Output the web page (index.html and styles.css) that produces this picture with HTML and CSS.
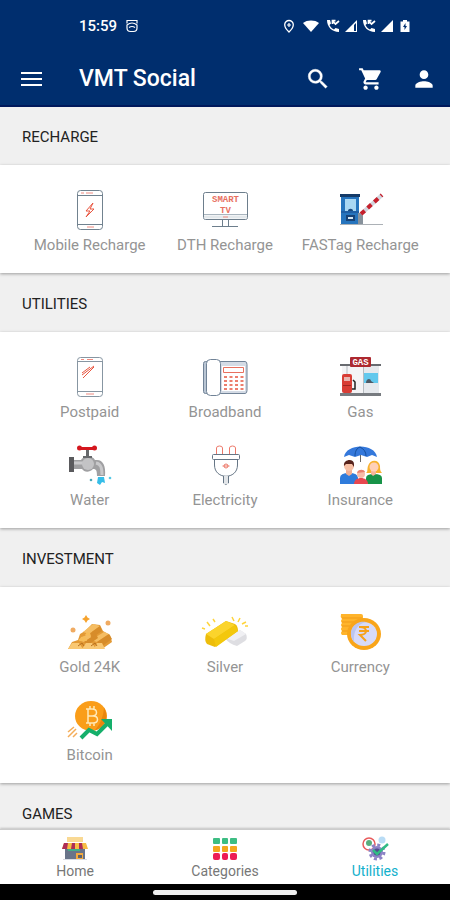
FILE: index.html
```html
<!DOCTYPE html>
<html lang="en">
<head>
  <meta charset="UTF-8">
  <meta name="viewport" content="width=device-width, initial-scale=1.0">
  <title>VMT Social</title>
  <link rel="stylesheet" href="styles.css">
</head>
<body>
  <header class="top">
    <div class="status">
      <span class="time">15:59</span>
      <svg class="status-icon" viewBox="0 0 14 14" fill="none" stroke="#fff"><path d="M2 4.500V1.500h10v3M2 6v3q0 3.500 3.500 3.500h3q3.500 0 3.500-3.500V6q-5-4-10 0zM4 8.500q3-2 6 0" stroke-width="1.200"/></svg>
      <div class="status-right">
        <svg class="status-icon spaced" viewBox="0 0 14 14"><path d="M7 1.500a4.300 4.300 0 0 0-4.300 4.300C2.700 9 7 13 7 13s4.300-4 4.300-7.200A4.300 4.300 0 0 0 7 1.500z" fill="none" stroke="#fff" stroke-width="1.300"/><path d="M7 4v4M5 6h4" stroke="#fff" stroke-width="1.200"/></svg>
        <svg class="status-icon wifi" viewBox="0 0 18 14"><path d="M1 4C5 .7 13 .7 17 4L9 13z" fill="#fff"/></svg>
        <svg class="status-icon" viewBox="0 0 14 14" fill="#fff"><path d="M1 1h3l1 3.500L3.500 6C4.500 8 6 9.500 8 10.500L9.500 9l3.500 1v3C6 13 1 8 1 1z"/><path d="M6.500 2l3 3L13 2M6.500 5V1.700h3" fill="none" stroke="#fff" stroke-width="1.700"/></svg>
        <svg class="status-icon" viewBox="0 0 14 14"><path d="M1 13L13 1v12z" fill="#fff"/><path d="M10 6v6h2V4z" fill="#002e6e"/></svg>
        <svg class="status-icon" viewBox="0 0 14 14" fill="#fff"><path d="M1 1h3l1 3.500L3.500 6C4.500 8 6 9.500 8 10.500L9.500 9l3.500 1v3C6 13 1 8 1 1z"/><path d="M6.500 2l3 3L13 2M6.500 5V1.700h3" fill="none" stroke="#fff" stroke-width="1.700"/></svg>
        <svg class="status-icon" viewBox="0 0 14 14"><path d="M1 13L13 1v12z" fill="#fff"/></svg>
        <svg class="status-icon" viewBox="0 0 14 14"><path d="M5 1h4v1.500h2.500V13h-9V2.500H5z" fill="#fff"/><path d="M7.500 4L5 8h1.500v3L9 7H7.500z" fill="#002e6e"/></svg>
      </div>
    </div>
    <div class="appbar">
      <button class="icon-btn" aria-label="Menu">
        <svg viewBox="0 0 26 26" fill="none" stroke="#fff" stroke-width="2"><path d="M3 7h21M3 13h21M3 19h21"/></svg>
      </button>
      <h1>VMT Social</h1>
      <button class="icon-btn" aria-label="Search">
        <svg viewBox="0 0 24 24" fill="#fff" stroke="#fff" stroke-width=".4"><path d="M15.500 14h-.79l-.28-.27A6.470 6.470 0 0 0 16 9.500 6.500 6.500 0 1 0 9.500 16c1.610 0 3.090-.59 4.230-1.570l.27.28v.79l5 4.990L20.490 19l-4.990-5zm-6 0C7.010 14 5 11.990 5 9.500S7.010 5 9.500 5 14 7.010 14 9.500 11.990 14 9.500 14z"/></svg>
      </button>
      <button class="icon-btn" aria-label="Cart">
        <svg viewBox="0 0 24 24" fill="#fff"><path d="M7 18c-1.100 0-1.990.9-1.990 2S5.900 22 7 22s2-.9 2-2-.9-2-2-2zM1 2v2h2l3.600 7.590-1.350 2.450c-.16.280-.25.610-.25.960 0 1.100.9 2 2 2h12v-2H7.420c-.14 0-.25-.11-.25-.25l.03-.12.9-1.630h7.450c.75 0 1.410-.41 1.750-1.030l3.580-6.490A1 1 0 0 0 20 4H5.210l-.94-2H1zm16 16c-1.100 0-1.990.9-1.990 2s.89 2 1.990 2 2-.9 2-2-.9-2-2-2z"/></svg>
      </button>
      <button class="icon-btn" aria-label="Account">
        <svg viewBox="0 0 24 24" fill="#fff"><path d="M12 12c2.210 0 4-1.790 4-4s-1.790-4-4-4-4 1.790-4 4 1.790 4 4 4zm0 2c-2.670 0-8 1.340-8 4v2h16v-2c0-2.660-5.330-4-8-4z"/></svg>
      </button>
    </div>
  </header>

  <main>
    <section>
      <h2>RECHARGE</h2>
      <div class="grid">
        <a class="tile" href="#">
          <svg viewBox="0 0 48 48" fill="none" stroke="#71828f"><rect x="11.500" y="4.500" width="25" height="39" rx="3"/><path d="M12 9.500h24M12 38.500h24"/><path d="M15 7h3M20 7h7M21 41h7" stroke="#f08a80"/><path d="M27 17l-7 8h4l-4 6 8-8h-4z" stroke="#e8553f"/></svg>
          <span>Mobile Recharge</span>
        </a>
        <a class="tile" href="#">
          <svg viewBox="0 0 48 48" fill="none" stroke="#6d7e8c"><rect x="2.500" y="6.500" width="44" height="27" rx="2"/><path d="M3 28.500h43" stroke="#a9b5be"/><path d="M21.500 34v6M27.500 34v6M11 40.500h26"/><path d="M3 31h43" stroke="#e3e8eb" stroke-width="3"/><path d="M22 31h5" stroke="#f08a80"/><g class="tv-text"><text x="24.500" y="16">SMART</text><text x="24.500" y="27">TV</text></g></svg>
          <span>DTH Recharge</span>
        </a>
        <a class="tile" href="#">
          <svg viewBox="0 0 48 48"><path d="M5 10h18v28H5z" fill="#2674bd"/><path d="M4 8h20v3H4z" fill="#153b68"/><path d="M9 13h11v12H9z" fill="#a9d7f3"/><path d="M12 25c0-3 5-3 5 0z" fill="#17487e"/><path d="M5 25h18v2H5z" fill="#1f5fa5"/><path d="M10 29h9v6h-9z" fill="#174276"/><path d="M12 31h5v2h-5z" fill="#d8e8f3"/><path d="M22 27h5v11h-5z" fill="#87929c"/><path d="M25 28L46 9" stroke="#d2d5de" stroke-width="4"/><path d="M25 28L46 9" stroke="#c6202c" stroke-width="4" stroke-dasharray="5 4"/><path d="M4 38.500h43" stroke="#acb1b6"/></svg>
          <span>FASTag Recharge</span>
        </a>
      </div>
    </section>

    <section>
      <h2>UTILITIES</h2>
      <div class="grid">
        <a class="tile" href="#">
          <svg viewBox="0 0 48 48" fill="none" stroke="#8796a2"><rect x="11.500" y="4.500" width="25" height="39" rx="3"/><path d="M12 8.500h24M12 38.500h24"/><path d="M15 6.500h3M21 6.500h6M20 41h8" stroke="#f08a80"/><path d="M16 20l8-6M16 22l12-9M17 25l11-11" stroke="#e8553f"/></svg>
          <span>Postpaid</span>
        </a>
        <a class="tile" href="#">
          <svg viewBox="0 0 48 48" fill="none" stroke="#718397"><rect x="2.500" y="8.500" width="6" height="32" rx="2" fill="#b9c5d3"/><path d="M18 8.500h26q2 0 2 3v26q0 3-2 3H18z" fill="#d4dbe5"/><rect x="5.500" y="6.500" width="14" height="36" rx="4" fill="#fff"/><path d="M21 13h23v25H21z" fill="#fff" stroke="none"/><path d="M22.500 14.500h20v5h-20z" fill="#fff" stroke="#e8705f"/><path d="M23 24h20M23 28h20M23 32h20M23 36h20" stroke="#e8553f" stroke-width="1.500" stroke-dasharray="3 2.500"/></svg>
          <span>Broadband</span>
        </a>
        <a class="tile" href="#">
          <svg viewBox="0 0 48 48"><path d="M6 13h37v27H6z" fill="#f4f4f6"/><path d="M27 13h16v27H27z" fill="#e6e9ed"/><path d="M4 11h41v2H4z" fill="#686b70"/><path d="M4 40h41v3H4z" fill="#777b80"/><path d="M28 20h14v10H28z" fill="#62c8ed"/><path d="M30 30c0-5 5-5 5-2l3 2z" fill="#4d5965"/><path d="M11 13v9M27.500 13v27" stroke="#b7bcc1"/><rect x="6" y="21" width="10" height="19" rx="2" fill="#d83d35"/><path d="M8 24h6v4H8z" fill="#e7b6b1"/><path d="M7 32h8v1H7z" fill="#9e2721"/><path d="M16 36h3v-7l-2-2" fill="none" stroke="#222" stroke-width="1.500"/><rect x="14" y="4" width="21" height="10" rx="1" fill="#ad2930"/><text x="24.500" y="12" class="gas-text">GAS</text></svg>
          <span>Gas</span>
        </a>
        <a class="tile" href="#">
          <svg viewBox="0 0 48 48"><path d="M3 16h5v15H3z" fill="#5a5a5d"/><path d="M8 19h7c2-4 11-5 14 0h2c6 0 9 6 8 16h-8c0-6-1-7-4-7-4 4-9 3-11 0H8z" fill="#a0a0a2"/><path d="M8 22h16M30 22c5 1 6 5 6 12" fill="none" stroke="#c9c9cb" stroke-width="3"/><circle cx="22" cy="23" r="6" fill="#c3c3c5"/><path d="M20 9h3v6h3v2h-9v-2h3z" fill="#66686b"/><path d="M14 7.500h14" stroke="#d4171e" stroke-width="3"/><circle cx="13.500" cy="7" r="2.500" fill="#d4171e"/><circle cx="28.500" cy="7" r="2.500" fill="#d4171e"/><path d="M32 36h6l1 6-3-1-2 3-3-2z" fill="#35bde8"/><circle cx="25" cy="39" r="1.300" fill="#4ba9b9"/><circle cx="44" cy="37" r="1.300" fill="#57c8e5"/></svg>
          <span>Water</span>
        </a>
        <a class="tile" href="#">
          <svg viewBox="0 0 48 48" fill="none" stroke="#657585"><path d="M15.500 13V7q0-2 3-2t3 2v6M28.500 13V7q0-2 3-2t3 2v6" stroke="#ed7869"/><rect x="11.500" y="13.500" width="27" height="5" rx="1"/><path d="M13.500 19v5c0 15 23 15 23 0v-5M22.500 35v7q2 3 5 0v-7"/><path d="M23 35h4v8h-4z" fill="#e2e5e8" stroke="none"/><circle cx="25" cy="25" r="2" stroke="#ed7869"/><path d="M21.500 25h7" stroke="#ed7869"/></svg>
          <span>Electricity</span>
        </a>
        <a class="tile" href="#">
          <svg viewBox="0 0 48 48"><path d="M8 16C10 2 39 2 41 16l-5-2-5 2-6-2-6 2-6-2z" fill="#3478db"/><path d="M19 15c0-5 2-8 5-9 4 2 6 5 6 9" fill="none" stroke="#164f9b"/><path d="M24.500 14v7" stroke="#686868"/><path d="M4 43v-6q0-5 9-5t9 5v6z" fill="#2f7bdb"/><path d="M10 28h6v5l-3 2-3-2z" fill="#f3ae91"/><circle cx="13" cy="25" r="5" fill="#f8c0a5"/><path d="M8 25c-1-7 10-8 10-2v3l-2-3h-6z" fill="#57231c"/><path d="M30 32c2-1 1-4 2-7 2-7 11-7 12 0 0 3 0 5 2 7z" fill="#f8b22f"/><path d="M30 43v-6q0-4 8-4t8 4v6z" fill="#189348"/><path d="M35 28h5v5l-3 2-2-2z" fill="#f5b59a"/><circle cx="38" cy="26" r="4.500" fill="#ffd0b8"/><path d="M18 43c0-8 14-8 14 0z" fill="#e8474f"/><circle cx="25" cy="33" r="4" fill="#f8bba8"/><path d="M21 32c1-4 7-4 8-1z" fill="#e97f6f"/></svg>
          <span>Insurance</span>
        </a>
      </div>
    </section>

    <section>
      <h2>INVESTMENT</h2>
      <div class="grid">
        <a class="tile" href="#">
          <svg viewBox="0 0 48 48"><path d="M20 7l1.500 2.500L24 11l-2.500 1.500L20 15l-1.500-2.500L16 11l2.500-1.500z" fill="#f6a32e"/><circle cx="7" cy="22" r="2.500" fill="#f0ab62"/><circle cx="42" cy="15" r="2.500" fill="#f0ab62"/><path d="M2 41l4-7 6-2 2-6 5-3 7-7 8 1 3 6 7 4 2 7-10 7z" fill="#e39a35"/><path d="M17 24l10-8 7 2-11 8z" fill="#f5bd62"/><path d="M12 32l13-8 5 2-12 8zM25 32l13-8 5 2-12 8z" fill="#f5bd62"/><path d="M23 26l11-8 2 5-10 7zM18 34l12-8 2 4-10 7zM31 34l12-8 3 5-11 8z" fill="#d78c2a"/><path d="M2 41l4-6h7l4 6zM16 41l4-6h6l4 6zM28 41l3-6h5l3 6z" fill="#f9c873"/><path d="M13 33l2-4 4-1 2 5zM19 27l2-3 3 1 1 3z" fill="#f7bd58"/><path d="M12 38l4-3 2 3M25 38l4-3 2 3" fill="none" stroke="#b8701e"/></svg>
          <span>Gold 24K</span>
        </a>
        <a class="tile" href="#">
          <svg viewBox="0 0 48 48"><path d="M24 30l15-8 6 4q2 5-1 7l-8 5q-8-2-12-8z" fill="#dedee2"/><path d="M24 30l15-8 6 4-12 7z" fill="#f0f0f3"/><path d="M5 26l20-13 9 3q3 2 3 7L14 39l-8-3q-3-3-1-10z" fill="#edbd0b"/><path d="M5 26l20-13 9 4-21 14z" fill="#fbd42c"/><path d="M13 31l21-14 3 6-22 16z" fill="#f3c80d"/><path d="M1 20l3 1M6 14l3 4M12 11l2 3M31 9l2 4M39 10l-2 4M45 14l-4 2M47 18h-3" stroke="#ffd43c" stroke-width="1.500"/></svg>
          <span>Silver</span>
        </a>
        <a class="tile" href="#">
          <svg viewBox="0 0 48 48"><path d="M5 6h20q2 0 2 2v19H6q-2-2 0-4-2-2 0-4-2-2 0-4-2-2 0-4-2-2-1-5z" fill="#ffb42b"/><path d="M6 10h20M6 14h16M6 18h10M6 23h6" stroke="#f19b18"/><ellipse cx="28" cy="26" rx="17" ry="16" fill="#f9a51a"/><ellipse cx="28" cy="26" rx="13" ry="12" fill="#d7daf8"/><path d="M18 34c-8-11 1-22 12-20-9 2-13 10-12 20z" fill="#bcc5ee"/><path d="M23 19h10M23 23h10M24 19c8 0 8 8 0 8l6 6" fill="none" stroke="#f6a21b" stroke-width="2"/></svg>
          <span>Currency</span>
        </a>
        <a class="tile" href="#">
          <svg viewBox="0 0 48 48"><ellipse cx="25" cy="20" rx="16" ry="15" fill="#fa9d19"/><path d="M38 12c6 10 0 20-10 23 5-5 9-12 10-23z" fill="#e9860d"/><path d="M22 13v14M20 13h6c6 0 6 7 0 7h-4M22 20h5c6 0 6 7 0 7h-7M24 10v3M28 10v3M24 27v3M28 27v3" fill="none" stroke="#ffe9b8" stroke-width="1.500"/><path d="M15 42l8-8 8 4 12-12" fill="none" stroke="#15af6b" stroke-width="4"/><path d="M35 23h11v12z" fill="#15af6b"/><path d="M2 36l6-5M2 41l8-8M7 41l4-4" stroke="#f4ad59" stroke-width="1.500"/></svg>
          <span>Bitcoin</span>
        </a>
      </div>
    </section>

    <section>
      <h2>GAMES</h2>
    </section>
  </main>

  <nav class="bottom-nav">
    <a href="#">
      <svg viewBox="0 0 28 28"><path d="M6 2h16v5H6z" fill="#f9d994"/><path d="M4 13h20v11H4z" fill="#697489"/><path d="M2 24h24v1H2z" fill="#d9dce3"/><path d="M3 8h22l2 6H1z" fill="#f7bd45"/><path d="M3 8h4l-1 6H1zM11 8h3v6h-4zM18 8h3l1 6h-4z" fill="#ae2d56"/><path d="M7 14h12v2H7z" fill="#43ae87"/><path d="M15 18h7v6h-7z" fill="#f5aa3d"/><path d="M17 20h4v3h-4z" fill="#5c6270"/></svg>
      <span>Home</span>
    </a>
    <a href="#">
      <svg viewBox="0 0 28 28"><g fill="#3dbd83"><rect x="2" y="3" width="7" height="6" rx="1"/><rect x="11" y="3" width="6" height="6" rx="1"/><rect x="19" y="3" width="7" height="6" rx="1"/></g><g fill="#f4a71d"><rect x="2" y="11" width="7" height="6" rx="1"/><rect x="11" y="11" width="6" height="6" rx="1"/><rect x="19" y="11" width="7" height="6" rx="1"/></g><g fill="#ed1c55"><rect x="2" y="18" width="7" height="7" rx="2"/><rect x="11" y="18" width="6" height="7" rx="2"/><rect x="19" y="18" width="7" height="7" rx="2"/></g></svg>
      <span>Categories</span>
    </a>
    <a href="#" class="active">
      <svg viewBox="0 0 28 28"><circle cx="8" cy="9" r="6" fill="#fff" stroke="#e85b5c" stroke-width="1.500"/><circle cx="8" cy="8" r="3" fill="#59ad7d"/><circle cx="21" cy="5" r="3.500" fill="#b9dcf5"/><circle cx="16" cy="17" r="7" fill="none" stroke="#8d83c6" stroke-width="3" stroke-dasharray="3 2.500"/><circle cx="16" cy="17" r="6" fill="#8d83c6"/><circle cx="16" cy="17" r="3.500" fill="#514d90"/><path d="M12 15l4 4L27 9" fill="none" stroke="#31bc85" stroke-width="2.500"/></svg>
      <span>Utilities</span>
    </a>
  </nav>
  <div class="gesture-bar"></div>
</body>
</html>
```

FILE: styles.css
```css
* {
  box-sizing: border-box;
}

body {
  margin: 0;
  height: 100vh;
  display: flex;
  flex-direction: column;
  font-family: Roboto, "Liberation Sans", sans-serif;
  background-color: #f0f0f0;
}

/* Status bar and app bar */
.top {
  background-color: #002e6e;
  color: #fff;
  border-bottom: 2px solid #00185b;
  flex-shrink: 0;
}

.status {
  height: 52px;
  padding: 0 38px 0 79px;
  display: flex;
  align-items: center;
  gap: 8px;
}

.time {
  font-size: 15px;
  font-weight: 500;
}

.status-right {
  margin-left: auto;
  display: flex;
  gap: 4px;
}

.status-icon {
  width: 14px;
  height: 14px;
  display: block;
}

.spaced {
  margin-right: 2px;
}

.wifi {
  width: 18px;
  margin-right: 2px;
}

.appbar {
  height: 53px;
  padding: 0 6px 0 11px;
  display: flex;
  align-items: center;
  gap: 13px;
}

.appbar h1 {
  flex: 1;
  margin: 0;
  padding-left: 15px;
  font-size: 23px;
  line-height: 28px;
  font-weight: 500;
}

.icon-btn {
  width: 40px;
  height: 40px;
  padding: 7px;
  border: none;
  background: none;
  cursor: pointer;
}

.icon-btn svg {
  width: 26px;
  height: 26px;
  display: block;
}

/* Service lists */
main {
  flex: 1;
  min-height: 0;
  overflow-y: auto;
  scrollbar-width: none;
}

section h2 {
  margin: 0;
  height: 58px;
  padding: 0 22px;
  line-height: 60px;
  font-size: 15px;
  font-weight: 400;
  color: #222;
}

.grid {
  margin-bottom: 1px;
  padding: 21px 22px 18px;
  display: grid;
  grid-template-columns: repeat(3, 1fr);
  row-gap: 19px;
  background-color: #fff;
  box-shadow: 0 1px 3px rgba(0, 0, 0, 0.35);
}

.tile {
  display: flex;
  flex-direction: column;
  align-items: center;
  gap: 1px;
  color: #949494;
  font-size: 15px;
  line-height: 20px;
  white-space: nowrap;
  text-decoration: none;
}

.tile svg {
  width: 48px;
  height: 48px;
}

.tv-text {
  font-family: "Liberation Mono", monospace;
  font-size: 9px;
  font-weight: bold;
  text-anchor: middle;
  fill: #e8705f;
  stroke: none;
}

.gas-text {
  font-family: "Liberation Mono", monospace;
  font-size: 9px;
  font-weight: bold;
  text-anchor: middle;
  fill: #fff;
}

/* Bottom navigation */
.bottom-nav {
  height: 55px;
  padding-top: 5px;
  flex-shrink: 0;
  display: grid;
  grid-template-columns: repeat(3, 1fr);
  background-color: #fff;
  border-top: 1px solid #ccc;
  box-shadow: 0 -1px 2px rgba(0, 0, 0, 0.2);
  z-index: 1;
}

.bottom-nav a {
  display: flex;
  flex-direction: column;
  align-items: center;
  color: #777;
  font-size: 14px;
  line-height: 16px;
  text-decoration: none;
}

.bottom-nav svg {
  width: 28px;
  height: 28px;
}

.bottom-nav .active {
  color: #12b0cc;
}

.gesture-bar {
  height: 16px;
  flex-shrink: 0;
  display: flex;
  justify-content: center;
  align-items: center;
  background-color: #000;
}

.gesture-bar::after {
  content: "";
  width: 32%;
  height: 5px;
  border-radius: 3px;
  background-color: #eee;
}
```
